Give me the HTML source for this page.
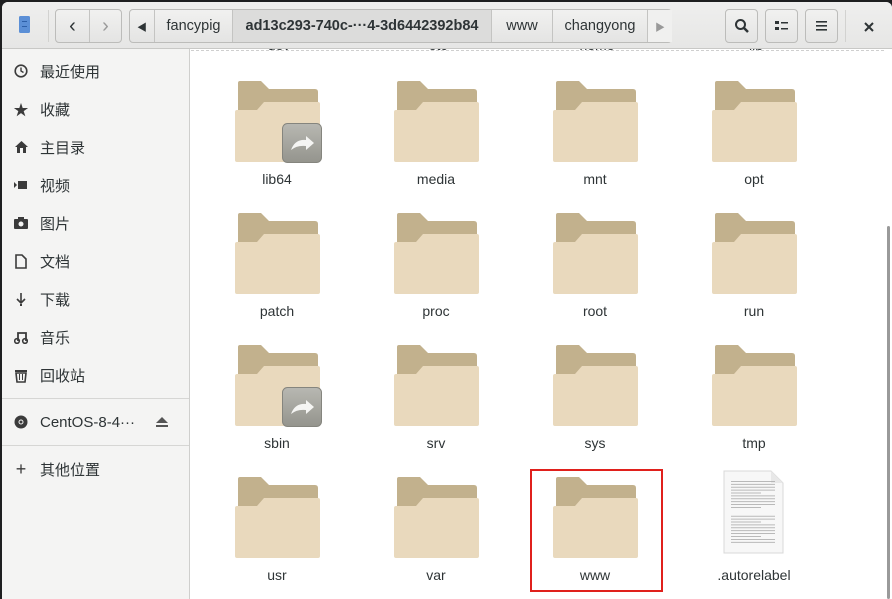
<!DOCTYPE html>
<html><head><meta charset="utf-8"><style>
*{margin:0;padding:0;box-sizing:border-box}
body{width:892px;height:599px;overflow:hidden;background:#1e1f20;font-family:"Liberation Sans","Noto Sans CJK SC",sans-serif;position:relative}
.win{position:absolute;left:2px;top:2px;right:0;bottom:0;background:#fff;border-radius:6px 6px 0 0;overflow:hidden}
.hdr{position:absolute;left:0;top:0;right:0;height:47px;background:linear-gradient(#efefee,#e6e6e5);border-bottom:1px solid #c8c8c6}
.btn{position:absolute;top:7px;height:34px;border:1px solid #bcbcba;border-radius:4px;background:linear-gradient(#f1f1f0,#e4e4e3);font-size:15px;color:#2e3436;display:flex;align-items:center;justify-content:center}
.seg{position:absolute;top:0;bottom:0;display:flex;align-items:center;justify-content:center;border-left:1px solid #c4c4c2;font-size:14.5px;color:#2e3436}
.side{position:absolute;left:0;top:47px;width:188px;bottom:0;background:#f4f4f3;border-right:1px solid #cfcfcd}
.it{position:absolute;left:0;height:30px;display:flex;align-items:center;font-size:15px;color:#2e3436}
.it .ic{width:38px;display:flex;justify-content:center;color:#3b3b3b}
.sep{position:absolute;left:0;right:0;height:1px;background:#d6d6d4}
.fold{position:absolute;width:90px;height:82px}
.lbl{position:absolute;width:130px;text-align:center;font-size:14px;color:#2e3436}
</style></head><body>
<svg width="0" height="0" style="position:absolute"><defs>
<symbol id="f" viewBox="0 0 90 82">
<path d="M5 0H26L34 8H80Q83 8 83 11V60H3V2Q3 0 5 0Z" fill="#c2b18d"/>
<path d="M2 29H22L29 21H83Q85 21 85 23V79Q85 81 83 81H2Q0 81 0 79V31Q0 29 2 29Z" fill="#e9d9bd"/>
</symbol>
<symbol id="l" viewBox="0 0 40 40">
<defs><linearGradient id="lg" x1="0" y1="0" x2="0" y2="1"><stop offset="0" stop-color="#b8b8b2"/><stop offset="1" stop-color="#94948d"/></linearGradient></defs>
<rect x="0.5" y="0.5" width="39" height="39" rx="5" fill="url(#lg)" stroke="#85857e"/>
<path d="M9 27Q13 16 24 17V13L32 20L24 27V23Q15 22 9 27Z" fill="#f5f5f3"/>
</symbol>
</defs></svg>
<div class="win">
<div class="hdr">
 <svg style="position:absolute;left:17px;top:14px" width="11" height="17"><rect x="0" y="0" width="11" height="17" rx="1.5" fill="#5b8fd6"/><rect x="3" y="5" width="5" height="1" fill="#2d5fa8"/><rect x="3" y="10" width="5" height="1" fill="#2d5fa8"/></svg>
 <div style="position:absolute;left:46px;top:8px;width:1px;height:32px;background:#d2d2d0"></div>
 <div class="btn" style="left:53px;width:67px"><span style="position:absolute;left:0;width:33px;text-align:center;font-size:20px">‹</span><span style="position:absolute;left:33px;top:0;bottom:0;border-left:1px solid #c4c4c2"></span><span style="position:absolute;left:33px;width:33px;text-align:center;font-size:20px;color:#9a9a9a">›</span></div>
 <div class="btn" style="left:127px;width:543px;justify-content:flex-start">
  <div class="seg" style="left:0;width:24px;border-left:none;font-size:10px">◀</div>
  <div class="seg" style="left:24px;width:78px">fancypig</div>
  <div class="seg" style="left:102px;width:259px;font-weight:bold;background:#dcdcdb">ad13c293-740c-···4-3d6442392b84</div>
  <div class="seg" style="left:361px;width:61px">www</div>
  <div class="seg" style="left:422px;width:95px">changyong</div>
  <div class="seg" style="left:517px;width:25px;font-size:10px;color:#999;background:#f0f0ef">▶</div>
 </div>
 <div class="btn" style="left:723px;width:33px"><svg width="16" height="16"><circle cx="6.5" cy="6.5" r="4.5" fill="none" stroke="#2e3436" stroke-width="2"/><path d="M10 10L14 14" stroke="#2e3436" stroke-width="2.5"/></svg></div>
 <div class="btn" style="left:763px;width:33px"><svg width="14" height="12"><rect x="0" y="1" width="4" height="3" fill="#2e3436"/><rect x="0" y="7" width="4" height="3" fill="#2e3436"/><rect x="6" y="2" width="7" height="1.5" fill="#2e3436"/><rect x="6" y="8" width="7" height="1.5" fill="#2e3436"/></svg></div>
 <div class="btn" style="left:803px;width:33px"><svg width="14" height="12"><rect x="1" y="1" width="11" height="1.6" fill="#2e3436"/><rect x="1" y="5" width="11" height="1.6" fill="#2e3436"/><rect x="1" y="9" width="11" height="1.6" fill="#2e3436"/></svg></div>
 <div style="position:absolute;left:843px;top:8px;width:1px;height:32px;background:#d2d2d0"></div>
 <svg style="position:absolute;left:862px;top:20px" width="10" height="10"><path d="M1 1L9 9M9 1L1 9" stroke="#2e3436" stroke-width="2"/></svg>
</div>
<div class="side">
 <div class="it" style="top:7px"><div class="ic"><svg width="14" height="14"><circle cx="7" cy="7" r="5.8" fill="none" stroke="#3b3b3b" stroke-width="1.6"/><path d="M7 3.5V7L9.5 8.5" fill="none" stroke="#3b3b3b" stroke-width="1.4"/></svg></div><span>最近使用</span></div>
 <div class="it" style="top:45px"><div class="ic">★</div><span>收藏</span></div>
 <div class="it" style="top:83px"><div class="ic"><svg width="15" height="14"><path d="M7.5 1L14 7H12V13H3V7H1Z" fill="#3b3b3b"/><rect x="6" y="8" width="3" height="5" fill="#f4f4f3"/></svg></div><span>主目录</span></div>
 <div class="it" style="top:121px"><div class="ic"><svg width="14" height="10"><path d="M0 2L3 5L0 8Z" fill="#3b3b3b"/><rect x="4" y="1" width="9" height="8" fill="#3b3b3b"/></svg></div><span>视频</span></div>
 <div class="it" style="top:159px"><div class="ic"><svg width="14" height="12"><rect x="0" y="2" width="14" height="10" rx="1" fill="#3b3b3b"/><rect x="4" y="0" width="6" height="3" fill="#3b3b3b"/><circle cx="7" cy="7" r="2.5" fill="#f4f4f3"/></svg></div><span>图片</span></div>
 <div class="it" style="top:197px"><div class="ic"><svg width="12" height="15"><path d="M1 1H7L11 5V14H1Z" fill="none" stroke="#3b3b3b" stroke-width="1.6"/></svg></div><span>文档</span></div>
 <div class="it" style="top:235px"><div class="ic"><svg width="12" height="14"><path d="M6 1V11M2 7L6 11L10 7" fill="none" stroke="#3b3b3b" stroke-width="1.6"/><rect x="5" y="12" width="2" height="2" fill="#3b3b3b"/></svg></div><span>下载</span></div>
 <div class="it" style="top:273px"><div class="ic"><svg width="14" height="13"><path d="M4 10V2H12V10" fill="none" stroke="#3b3b3b" stroke-width="1.8"/><circle cx="3" cy="10" r="2.3" fill="none" stroke="#3b3b3b" stroke-width="1.6"/><circle cx="11" cy="10" r="2.3" fill="none" stroke="#3b3b3b" stroke-width="1.6"/></svg></div><span>音乐</span></div>
 <div class="it" style="top:311px"><div class="ic"><svg width="14" height="15"><rect x="1" y="2" width="12" height="2" fill="#3b3b3b"/><path d="M2 5H12L11 14H3Z" fill="none" stroke="#3b3b3b" stroke-width="1.6"/><path d="M5.5 6V12M8.5 6V12" stroke="#3b3b3b"/></svg></div><span>回收站</span></div>
 <div class="sep" style="top:349px"></div>
 <div class="it" style="top:358px;width:188px"><div class="ic"><svg width="14" height="14"><circle cx="7" cy="7" r="6.5" fill="#3b3b3b"/><circle cx="7" cy="7" r="2" fill="none" stroke="#f4f4f3"/></svg></div><span>CentOS-8-4···</span><svg style="position:absolute;left:153px;top:9px" width="14" height="12"><path d="M7 1L13 7H1Z" fill="#555"/><rect x="1" y="9" width="12" height="2" fill="#555"/></svg></div>
 <div class="sep" style="top:396px"></div>
 <div class="it" style="top:405px"><div class="ic" style="font-size:18px">+</div><span>其他位置</span></div>
</div>
<div style="position:absolute;left:189px;top:48px;right:0;bottom:0;background:#fff">
 <div style="position:absolute;left:0;right:8px;top:0;border-top:1px dashed #cfcfcf"></div>
 <div style="position:absolute;right:2px;top:176px;width:3px;bottom:0;background:#9a9a9a;border-radius:2px"></div>
</div>
<div style="position:absolute;left:189px;top:47px;width:690px;height:6px;overflow:hidden">
 <div class="lbl" style="left:23px;top:-12px">dev</div><div class="lbl" style="left:182px;top:-12px">etc</div><div class="lbl" style="left:341px;top:-12px">home</div><div class="lbl" style="left:500px;top:-12px">lib</div>
</div>
</div>
<div id="g"></div>
<script>
var names=[["lib64","media","mnt","opt"],["patch","proc","root","run"],["sbin","srv","sys","tmp"],["usr","var","www",".autorelabel"]];
var cx=[277,436,595,754],h="";
for(var r=0;r<4;r++)for(var c=0;c<4;c++){var n=names[r][c],x=cx[c],y=81+r*132;
if(n==".autorelabel"){h+='<svg style="position:absolute;left:723px;top:'+(y-7)+'px" width="62" height="84"><path d="M1 1H48L60 13V83H1Z" fill="#f7f7f7" stroke="#d8d8d8"/><path d="M48 1V13H60" fill="#e8e8e8"/>';for(var k=0;k<22;k++){if(k==10||k==11)continue;h+='<rect x="8" y="'+(11+k*2.9)+'" width="'+(k%5==4?30:44)+'" height="0.8" fill="#aaa"/>';}h+='</svg>';}
else{h+='<svg class="fold" style="left:'+(x-42)+'px;top:'+y+'px" viewBox="0 0 90 82"><use href="#f"/></svg>';
if(n=="lib64"||n=="sbin")h+='<svg style="position:absolute;left:'+(x+5)+'px;top:'+(y+42)+'px" width="40" height="40"><use href="#l"/></svg>';}
h+='<div class="lbl" style="left:'+(x-65)+'px;top:'+(y+90)+'px">'+n+'</div>';}
h+='<div style="position:absolute;left:530px;top:469px;width:133px;height:123px;border:2px solid #e0201c"></div>';
document.getElementById("g").innerHTML=h;
</script>
</body></html>
